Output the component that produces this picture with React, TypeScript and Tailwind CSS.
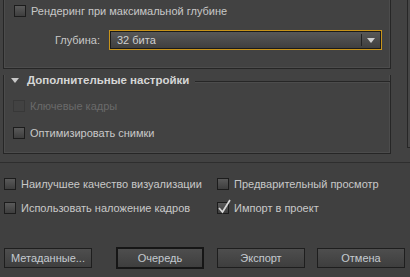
import React from "react";

const boxClass =
  "w-[12px] h-[12px] shrink-0 border border-[#1c1c1c] bg-gradient-to-b from-[#5a5a5a] to-[#3e3e3e] relative";

function Check({
  label,
  checked,
  disabled,
  className = "",
}: {
  label: string;
  checked?: boolean;
  disabled?: boolean;
  className?: string;
}) {
  return (
    <div className={`flex items-center gap-[5px] h-[14px] whitespace-nowrap ${className}`}>
      <div
        className={
          disabled
            ? "w-[12px] h-[12px] shrink-0 border border-[#383838] bg-[#424242]"
            : boxClass
        }
      >
        {checked && (
          <svg
            width="15"
            height="15"
            viewBox="0 0 15 15"
            className="absolute left-[-1px] top-[-4px]"
          >
            <path
              d="M2 9 L5.5 13 L13 1"
              fill="none"
              stroke="#d8d8d8"
              strokeWidth="1.7"
            />
          </svg>
        )}
      </div>
      <span className={disabled ? "text-[#6a6a6a]" : "text-[#c8c8c8]"}>{label}</span>
    </div>
  );
}

function Button({ label, primary }: { label: string; primary?: boolean }) {
  return (
    <button
      className={`w-[88px] flex items-center justify-center bg-gradient-to-b from-[#4e4e4e] to-[#3e3e3e] text-[#c4cad0] ${
        primary ? "border-2 border-[#161616] h-[22px] -my-[1px]" : "border border-[#1e1e1e] h-[20px]"
      }`}
    >
      {label}
    </button>
  );
}

export default function App() {
  return (
    <div className="w-[410px] h-[277px] overflow-hidden bg-[#424242] font-['Liberation_Sans',Arial,sans-serif] text-[11px] leading-none">
      {/* scrolling settings panel */}
      <div className="flex h-[163px] border-b border-[#2e2e2e]">
        <div className="w-[407px]">
          <div className="ml-[3px] w-[388px] h-[69px] border-x border-b border-[#262626] shadow-[inset_1px_0_0_#4c4c4c,inset_-1px_-1px_0_#4c4c4c]">
            <Check label="Рендеринг при максимальной глубине" className="pl-[10px] pt-[4px] h-[18px]" />
            <div className="flex items-center mt-[12px] h-[20px]">
              <span className="w-[96px] text-right text-[#c8c8c8]">Глубина:</span>
              <div className="ml-[9px] w-[273px] h-[20px] border border-[#c8941a] p-0">
                <div className="flex items-center h-full border border-[#1a1a1a] bg-gradient-to-b from-[#585858] to-[#3f3f3f]">
                  <span className="flex-1 pl-[6px] text-[#d0d0d0]">32 бита</span>
                  <div className="w-px h-[12px] bg-[#222]" />
                  <div className="w-[18px] flex justify-center">
                    <svg width="8" height="5" viewBox="0 0 8 5">
                      <path d="M0 0 H8 L4 5 Z" fill="#cfcfcf" />
                    </svg>
                  </div>
                </div>
              </div>
            </div>
          </div>

          <div className="ml-[3px] mt-[12px] w-[388px] h-[79px] border-x border-b border-[#262626] shadow-[inset_1px_0_0_#4c4c4c,inset_-1px_-1px_0_#4c4c4c]">
            <div className="flex items-center h-[12px] -mt-[6px]">
              <svg width="8" height="6" viewBox="0 0 8 6" className="ml-[7px]">
                <path d="M0 0 H8 L4 5 Z" fill="#c8c8c8" />
              </svg>
              <span className="ml-[8px] font-bold text-[11.5px] text-[#d6d6d6]">Дополнительные настройки</span>
              <div className="flex-1 ml-[6px] h-px bg-[#262626] shadow-[0_1px_0_#4c4c4c]" />
            </div>
            <Check label="Ключевые кадры" disabled className="pl-[9px] mt-[12px]" />
            <Check label="Оптимизировать снимки" className="pl-[9px] mt-[13px]" />
          </div>
        </div>
        <div className="w-[3px] h-[148px] border-l border-b border-[#262626] bg-[#474747]" />
      </div>

      {/* bottom options */}
      <div className="bg-[#404040] h-[114px] pt-[14px] px-[4px]">
        <div className="grid grid-cols-[212px_1fr] gap-y-[10px]">
          <Check label="Наилучшее качество визуализации" />
          <Check label="Предварительный просмотр" className="pl-[1px]" />
          <Check label="Использовать наложение кадров" />
          <Check label="Импорт в проект" checked className="pl-[1px]" />
        </div>
        <div className="flex mt-[33px]">
          <Button label="Метаданные..." />
          <div className="ml-[24px]">
            <Button label="Очередь" primary />
          </div>
          <div className="ml-[13px]">
            <Button label="Экспорт" />
          </div>
          <div className="ml-[12px]">
            <Button label="Отмена" />
          </div>
        </div>
      </div>
    </div>
  );
}
